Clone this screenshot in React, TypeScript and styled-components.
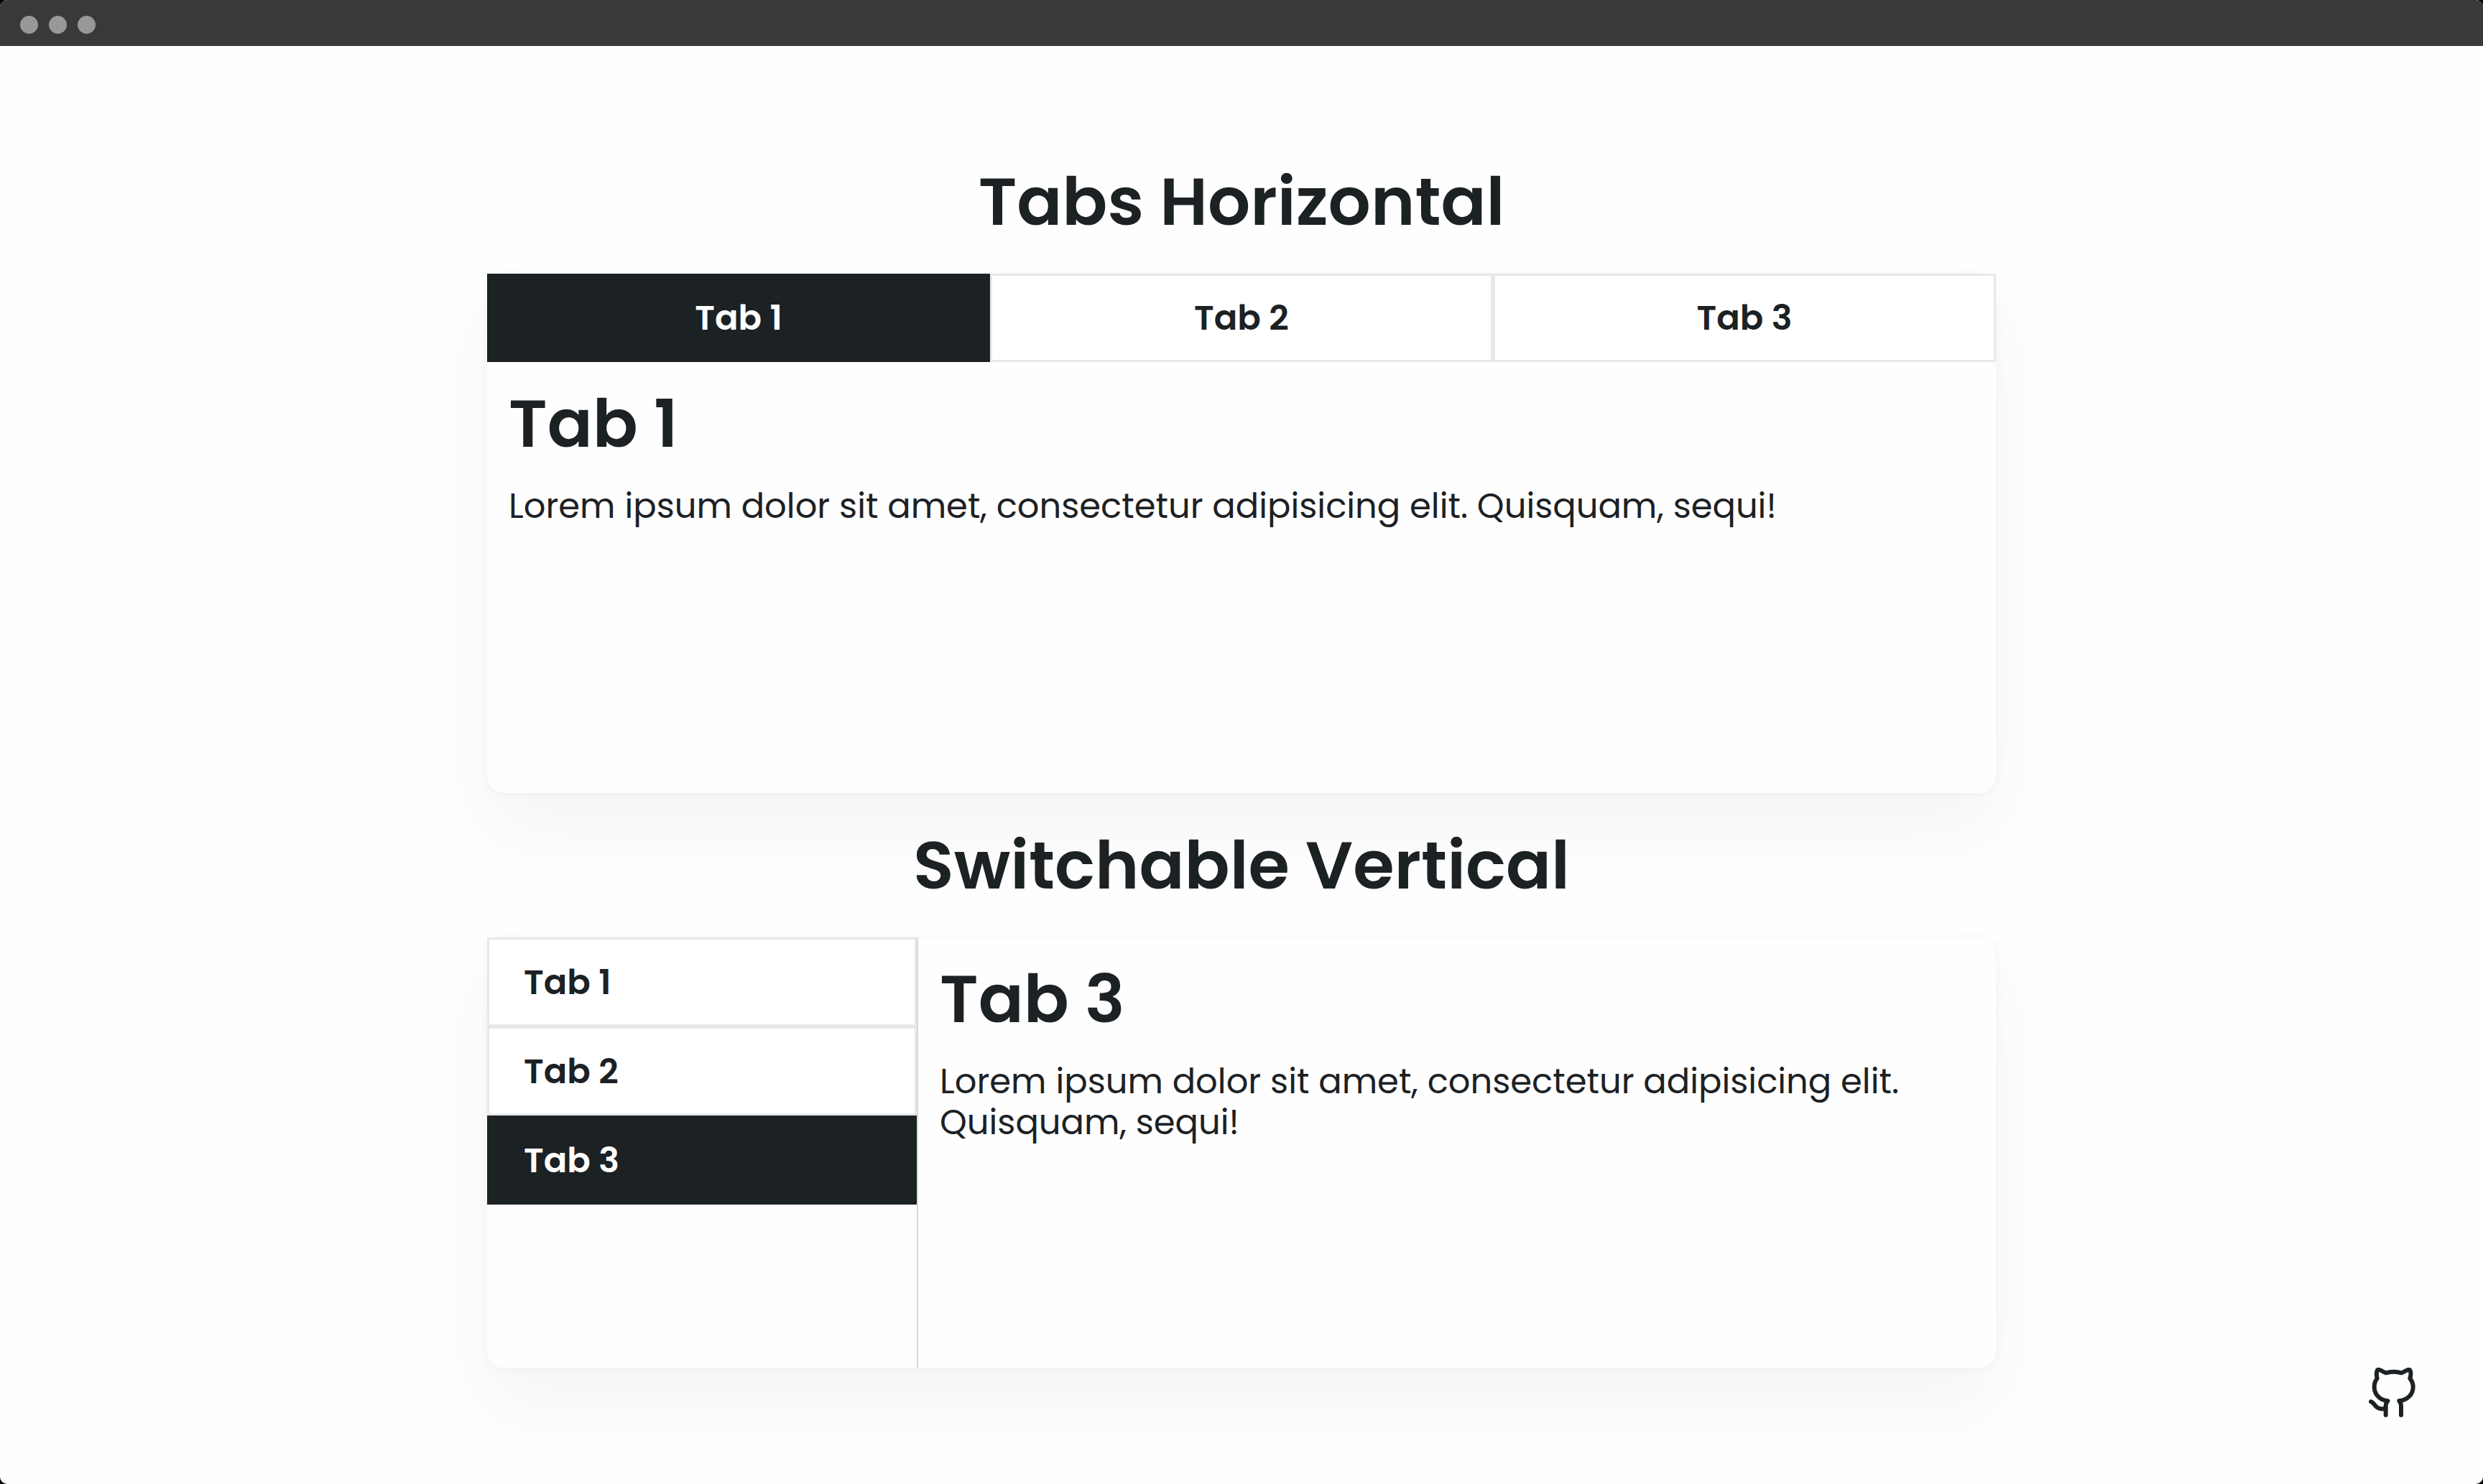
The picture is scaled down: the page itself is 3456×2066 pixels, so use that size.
import React, { useState } from "react";
import styled, { createGlobalStyle, css } from "styled-components";

const ink = "#1c2124";
const paper = "#fefefe";
const line = "#e7e9e9";

const GlobalStyle = createGlobalStyle`
  *, *::before, *::after { box-sizing: border-box; }
  body {
    margin: 0;
    background: #000;
    color: ${ink};
    font-family: Poppins, Inter, "Open Sans", sans-serif;
  }
  h1, h2, p { margin: 0; }
`;

const Window = styled.div`
  display: flex;
  flex-direction: column;
  min-height: 100vh;
  overflow: hidden;
  border-radius: 10px;
  background: ${paper};
`;

const TitleBar = styled.header`
  display: flex;
  align-items: center;
  gap: 15px;
  height: 64px;
  padding: 4px 28px 0;
  background: #38393b;
`;

const Dot = styled.span`
  width: 25px;
  height: 25px;
  border-radius: 50%;
  background: #98989a;
`;

const Main = styled.main`
  width: 100%;
  max-width: 2164px;
  margin: 0 auto;
  padding: 116px 32px;
`;

const SectionTitle = styled.h1`
  margin: 44px 0;
  font-size: 93px;
  font-weight: 600;
  line-height: 113px;
  text-align: center;
`;

const Card = styled.section<{ $vertical?: boolean }>`
  display: flex;
  flex-direction: ${(p) => (p.$vertical ? "row" : "column")};
  border-radius: 24px;
  background: ${paper};
  box-shadow: 0 2px 14px rgba(0, 0, 0, 0.04), 0 50px 110px rgba(0, 0, 0, 0.04);
`;

const TabList = styled.div<{ $vertical?: boolean }>`
  display: flex;
  ${(p) =>
    p.$vertical &&
    css`
      flex-direction: column;
      flex: 0 0 600px;
      border-right: 2px solid #d8d9d9;
    `}
`;

const Tab = styled.button<{ $vertical?: boolean }>`
  flex: ${(p) => (p.$vertical ? "none" : "1 1 0")};
  height: ${(p) => (p.$vertical ? 124 : 123)}px;
  padding: 0 48px;
  border: 3px solid ${line};
  background: #fff;
  color: ${ink};
  font: inherit;
  font-size: 48px;
  font-weight: 600;
  line-height: 57px;
  text-align: ${(p) => (p.$vertical ? "left" : "center")};
  cursor: pointer;

  &[aria-selected="true"] {
    border-color: ${ink};
    background: ${ink};
    color: #fff;
  }
`;

const Panel = styled.div`
  flex: 1 1 auto;
  min-width: 0;
  min-height: 600px;
  padding: 32px 30px;
`;

const PanelTitle = styled.h2`
  margin-bottom: 32px;
  font-size: 93px;
  font-weight: 600;
  line-height: 108px;
`;

const PanelText = styled.p`
  font-size: 48px;
  line-height: 57px;
`;

const SourceLink = styled.a`
  position: fixed;
  right: 94px;
  bottom: 93px;
  display: flex;
  color: ${ink};
`;

const tabs = ["Tab 1", "Tab 2", "Tab 3"];

function Tabs({ id, initial, vertical }: { id: string; initial: number; vertical?: boolean }) {
  const [active, setActive] = useState(initial);
  return (
    <Card $vertical={vertical}>
      <TabList
        role="tablist"
        aria-orientation={vertical ? "vertical" : "horizontal"}
        $vertical={vertical}
      >
        {tabs.map((name, i) => (
          <Tab
            key={name}
            id={`${id}-tab-${i}`}
            role="tab"
            type="button"
            aria-selected={i === active}
            aria-controls={`${id}-panel`}
            $vertical={vertical}
            onClick={() => setActive(i)}
          >
            {name}
          </Tab>
        ))}
      </TabList>
      <Panel id={`${id}-panel`} role="tabpanel" aria-labelledby={`${id}-tab-${active}`}>
        <PanelTitle>{tabs[active]}</PanelTitle>
        <PanelText>Lorem ipsum dolor sit amet, consectetur adipisicing elit. Quisquam, sequi!</PanelText>
      </Panel>
    </Card>
  );
}

function GithubIcon() {
  return (
    <svg
      width="65"
      height="69"
      viewBox="171 132 195 207"
      fill="none"
      stroke="currentColor"
      strokeWidth="18"
      strokeLinecap="round"
      strokeLinejoin="round"
      aria-hidden="true"
    >
      <path d="M242 330V292C242 285 244 278 250 271C215 267 194 242 194 212C194 198 199 186 206 177C203 165 203 152 206 144C208 139 214 140 220 143L242 154C262 148 288 148 308 154L330 143C336 140 342 139 344 144C347 152 347 165 343 177C352 188 356 198 356 212C356 242 335 267 298 271C304 278 306 285 306 292V330" />
      <path d="M180 274C192 278 195 290 206 298C216 305 230 305 240 302" />
    </svg>
  );
}

export default function App() {
  return (
    <>
      <GlobalStyle />
      <Window>
        <TitleBar>
          <Dot />
          <Dot />
          <Dot />
        </TitleBar>
        <Main>
          <SectionTitle>Tabs Horizontal</SectionTitle>
          <Tabs id="horizontal" initial={0} />
          <SectionTitle>Switchable Vertical</SectionTitle>
          <Tabs id="vertical" initial={2} vertical />
        </Main>
      </Window>
      <SourceLink href="#" aria-label="GitHub">
        <GithubIcon />
      </SourceLink>
    </>
  );
}
